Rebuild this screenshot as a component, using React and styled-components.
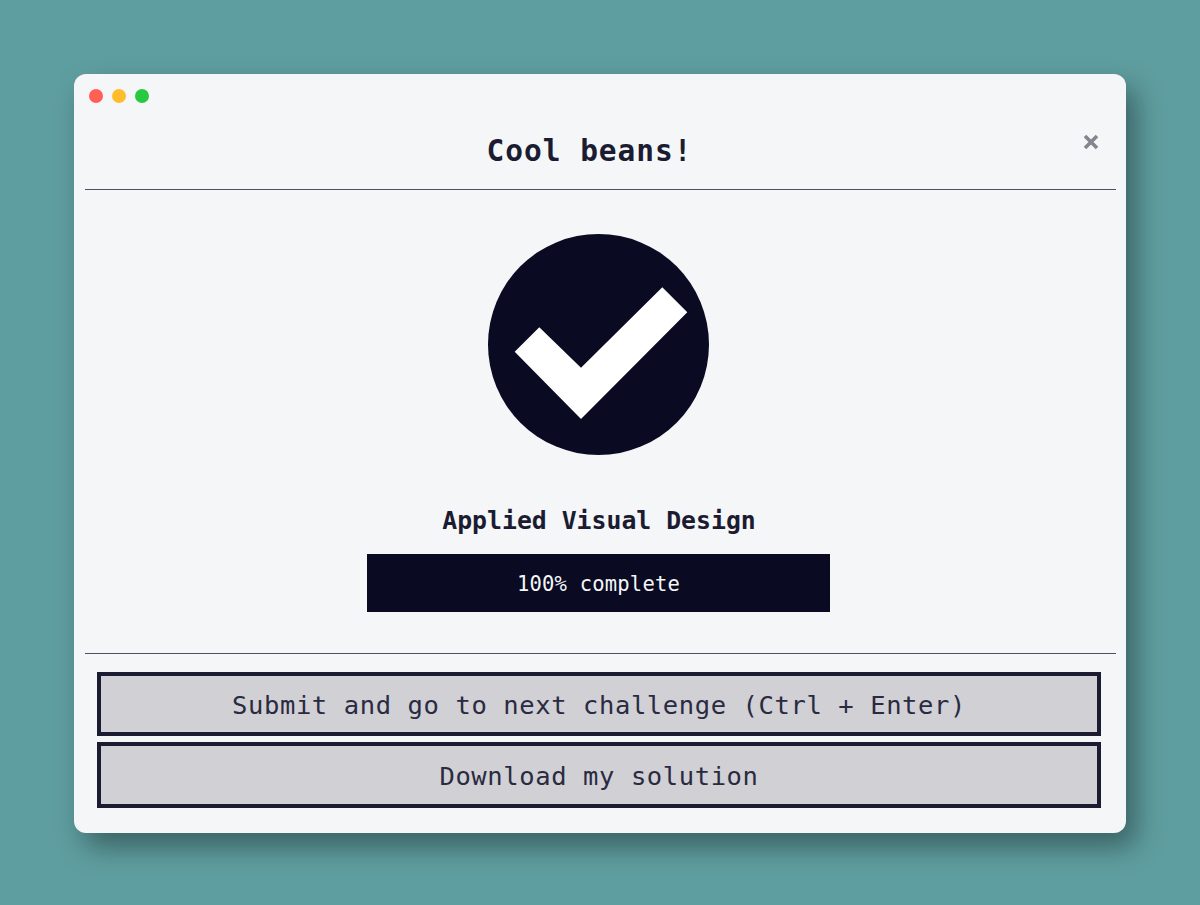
import React from 'react';
import styled, { createGlobalStyle } from 'styled-components';

const Global = createGlobalStyle`
  html, body { margin: 0; padding: 0; }
  body { background: #5f9ea0; font-family: "DejaVu Sans Mono", "Liberation Mono", monospace; }
`;

const Page = styled.main`
  box-sizing: border-box;
  width: 1200px;
  height: 905px;
  padding: 74px 74px 72px;
`;

const Window = styled.section`
  position: relative;
  height: 759px;
  display: flex;
  flex-direction: column;
  background: #f5f6f7;
  border-radius: 12px;
  box-shadow: 10px 14px 28px rgba(0, 0, 0, 0.38);
`;

const TitleBar = styled.div`
  box-sizing: border-box;
  height: 44px;
  padding: 15px 15px 0;
  display: flex;
  gap: 9px;
`;

const Dot = styled.span`
  width: 14px;
  height: 14px;
  border-radius: 50%;
  background: ${(p) => p.$color};
`;

const Header = styled.header`
  box-sizing: border-box;
  height: 72px;
  margin: 0 10px 0 11px;
  padding: 14px 22px 0 0;
  border-bottom: 1px solid #4f4f66;
  text-align: center;
`;

const Title = styled.h2`
  margin: 0;
  font-size: 29.5px;
  line-height: 38px;
  font-weight: 700;
  letter-spacing: 0.95px;
  color: #1b1b32;
`;

const Close = styled.button`
  position: absolute;
  top: 60px;
  right: 25px;
  width: 20px;
  height: 16px;
  padding: 0;
  border: 0;
  background: none;
  display: flex;
  align-items: center;
  justify-content: center;
`;

const Body = styled.div`
  flex: 1;
  display: flex;
  flex-direction: column;
  align-items: center;
  padding: 44px 25px 0 23px;
`;

const Badge = styled.svg`
  display: block;
  width: 221px;
  height: 221px;
  margin-right: 1px;
`;

const Heading = styled.h3`
  margin: 51px 0 18px;
  font-size: 24.8px;
  line-height: 30px;
  font-weight: 700;
  letter-spacing: 0;
  color: #1b1b32;
`;

const Progress = styled.div`
  box-sizing: border-box;
  width: 463px;
  height: 58px;
  margin-right: 1px;
  padding-top: 2px;
  display: flex;
  align-items: center;
  justify-content: center;
  background: #0a0a23;
  color: #f5f6f7;
  font-size: 20.5px;
  letter-spacing: 0.2px;
`;

const Footer = styled.footer`
  margin: 0 10px 0 11px;
  padding: 18px 15px 25px 12px;
  border-top: 1px solid #4f4f66;
  display: flex;
  flex-direction: column;
  gap: 6px;
`;

const Action = styled.button`
  box-sizing: border-box;
  height: ${(p) => p.$h}px;
  padding: 2px 0 0;
  background: #d0d0d5;
  border: 4px solid #1b1b32;
  color: #2a2a40;
  font-family: inherit;
  font-size: 25.5px;
  letter-spacing: 0.6px;
`;

export default function App() {
  return (
    <Page>
      <Global />
      <Window>
        <TitleBar>
          <Dot $color="#ff5f56" />
          <Dot $color="#ffbd2e" />
          <Dot $color="#27c93f" />
        </TitleBar>
        <Header>
          <Title>Cool beans!</Title>
        </Header>
        <Close aria-label="Close">
          <svg width="18" height="16" viewBox="0 0 18 16">
            <path d="M3 2 L15 14 M15 2 L3 14" stroke="#85858f" strokeWidth="3.6" strokeLinecap="butt" />
          </svg>
        </Close>
        <Body>
          <Badge viewBox="0 0 221 221">
            <circle cx="110.5" cy="110.5" r="110.5" fill="#0a0a23" />
            <polygon
              fill="#fff"
              points="26.7,117.7 51.3,93.3 93,133.7 174.3,53.3 199.3,78.3 93,185"
            />
          </Badge>
          <Heading>Applied Visual Design</Heading>
          <Progress>100% complete</Progress>
        </Body>
        <Footer>
          <Action $h={64}>Submit and go to next challenge (Ctrl + Enter)</Action>
          <Action $h={66}>Download my solution</Action>
        </Footer>
      </Window>
    </Page>
  );
}
